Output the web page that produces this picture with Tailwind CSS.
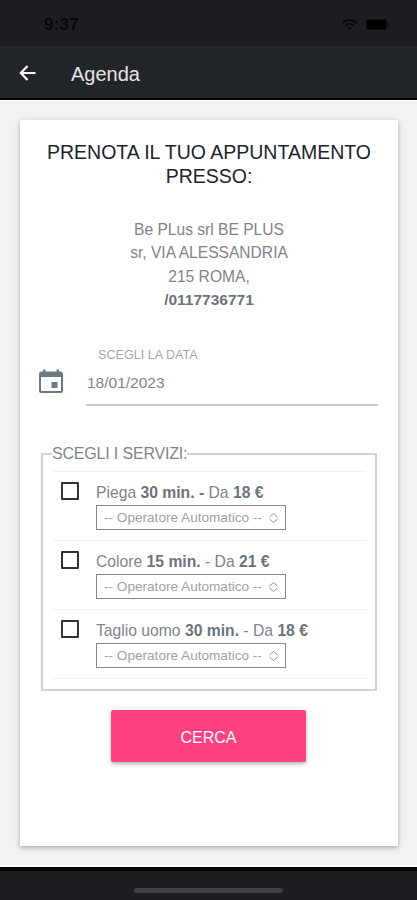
<!DOCTYPE html>
<html lang="it">
<head>
<meta charset="utf-8">
<title>Agenda</title>
<script src="https://cdn.jsdelivr.net/npm/@tailwindcss/browser@4"></script>
</head>
<body class="flex h-[900px] w-[417px] flex-col overflow-hidden bg-[#f1f2f4] font-['Liberation_Sans',Arial,sans-serif] text-[#7c858d]">
<div class="flex h-[46px] shrink-0 items-center justify-between bg-[#1d1e22] pt-[3px] pr-[27px] pl-[44px] text-[#08080a]">
  <span class="text-[17px] leading-none font-semibold tracking-[0.2px]">9:37</span>
  <div class="flex items-center gap-[8px]">
    <svg class="h-[13px] w-[17px]" viewBox="0 0 17 13" fill="none" stroke="currentColor" stroke-width="2"><path d="M1.5 5C5.5 1 11.500 1 15.500 5M4.200 7.800C6.700 5.500 10.300 5.500 12.800 7.800"/><path d="M8.500 12.200L6.300 10Q8.500 8.200 10.700 10Z" fill="currentColor" stroke="none"/></svg>
    <svg class="h-[11px] w-[24px]" viewBox="0 0 24 11"><rect x=".5" y=".5" width="20" height="10" rx="1.500" fill="#000"/><path d="M21.500 1.500Q23.800 3 23.800 5.500T21.500 9.500Z" fill="#111214"/></svg>
  </div>
</div>
<header class="flex h-[54px] shrink-0 items-center border-b-2 border-black bg-[#22262a] pt-[2px] pl-[19px] text-[#e4e4e4]">
  <svg class="h-[16px] w-[17px]" viewBox="0 0 17 16" fill="none" stroke="#fff" stroke-width="2.200"><path d="M8.500 1L1.800 8L8.500 15M2 8H16.500"/></svg>
  <h1 class="ml-[35px] pt-[2px] text-[20px] leading-none">Agenda</h1>
</header>
<main class="h-[767px] shrink-0 border-t border-b-2 border-white px-5 pt-[19px]">
  <section class="flex h-[726px] w-[378px] flex-col bg-white shadow-[0_2px_4px_rgba(0,0,0,0.22),0_1px_8px_rgba(0,0,0,0.1)]">
    <h2 class="mt-[20px] text-center text-[19.500px] leading-[24px] text-[#1b242d]">PRENOTA IL TUO APPUNTAMENTO<br>PRESSO:</h2>
    <p class="mt-[30px] text-center text-[15.600px] leading-[23.300px]">Be PLus srl BE PLUS<br>sr, VIA ALESSANDRIA<br>215 ROMA,<br><b class="text-[15.500px] text-[#6a7480]">/0117736771</b></p>
    <div class="mt-[36px] flex h-[59px] pl-[19px]">
      <svg class="mt-[22px] h-[25px] w-[24px]" viewBox="0 0 24 25"><path fill="#6c7a88" fill-rule="evenodd" d="M4 .5H6.500V2.500H17.500V.5H20V2.500H21.500Q24 2.500 24 5V21.500Q24 24 21.500 24H2.500Q0 24 0 21.500V5Q0 2.500 2.500 2.500H4ZM2 8V22H22V8ZM12.500 13H18.500V19H12.500Z"/></svg>
      <div class="ml-[23px] w-[292px] border-b-2 border-[#c8c9cb]">
        <div class="pl-[12px] text-[12.600px] leading-[16px] text-[#a2a7ab]">SCEGLI LA DATA</div>
        <div class="mt-[10px] pl-px text-[15.500px] leading-[20px]">18/01/2023</div>
      </div>
    </div>
    <fieldset class="mt-[38px] ml-[21px] h-[247px] w-[336px] border-2 border-[#d0d1d3] px-[9px]">
      <legend class="text-[16px] leading-[20px] tracking-[-0.180px] whitespace-nowrap">SCEGLI I SERVIZI:</legend>
      <div class="mt-[7px] w-[314px] border-t border-[#f0f1f2]">
        <div class="flex h-[69px] border-b border-[#f0f1f2] pt-[10px] pl-[9px]">
          <span class="h-[18px] w-[18px] shrink-0 rounded-[1px] border-2 border-[#303236]"></span>
          <div class="ml-[17px]">
            <div class="text-[15.700px] leading-[22px] whitespace-nowrap">Piega <b class="text-[#6a7480]">30 min. -</b> Da <b class="text-[#6a7480]">18 €</b></div>
            <div class="mt-px flex h-[25px] w-[190px] items-center border border-[#85888b] pt-px pl-[7px] text-[13.600px] whitespace-nowrap text-[#a0a2a4]"><span>-- Operatore Automatico --</span><svg class="mr-[7px] ml-auto h-[12px] w-[9px]" viewBox="0 0 9 12" fill="none" stroke="#8c8e90"><path d="M.5 5L4.500 1.500L8.500 5M.5 7L4.500 10.500L8.500 7"/></svg></div>
          </div>
        </div>
        <div class="flex h-[69px] border-b border-[#f0f1f2] pt-[10px] pl-[9px]">
          <span class="h-[18px] w-[18px] shrink-0 rounded-[1px] border-2 border-[#303236]"></span>
          <div class="ml-[17px]">
            <div class="text-[15.700px] leading-[22px] whitespace-nowrap">Colore <b class="text-[#6a7480]">15 min.</b> - Da <b class="text-[#6a7480]">21 €</b></div>
            <div class="mt-px flex h-[25px] w-[190px] items-center border border-[#85888b] pt-px pl-[7px] text-[13.600px] whitespace-nowrap text-[#a0a2a4]"><span>-- Operatore Automatico --</span><svg class="mr-[7px] ml-auto h-[12px] w-[9px]" viewBox="0 0 9 12" fill="none" stroke="#8c8e90"><path d="M.5 5L4.500 1.500L8.500 5M.5 7L4.500 10.500L8.500 7"/></svg></div>
          </div>
        </div>
        <div class="flex h-[69px] border-b border-[#f0f1f2] pt-[10px] pl-[9px]">
          <span class="h-[18px] w-[18px] shrink-0 rounded-[1px] border-2 border-[#303236]"></span>
          <div class="ml-[17px]">
            <div class="text-[15.700px] leading-[22px] whitespace-nowrap">Taglio uomo <b class="text-[#6a7480]">30 min.</b> - Da <b class="text-[#6a7480]">18 €</b></div>
            <div class="mt-px flex h-[25px] w-[190px] items-center border border-[#85888b] pt-px pl-[7px] text-[13.600px] whitespace-nowrap text-[#a0a2a4]"><span>-- Operatore Automatico --</span><svg class="mr-[7px] ml-auto h-[12px] w-[9px]" viewBox="0 0 9 12" fill="none" stroke="#8c8e90"><path d="M.5 5L4.500 1.500L8.500 5M.5 7L4.500 10.500L8.500 7"/></svg></div>
          </div>
        </div>
      </div>
    </fieldset>
    <button class="mt-[19px] ml-[91px] h-[52px] w-[195px] rounded-[2px] bg-[#ff4081] pt-[3px] text-[16px] text-white shadow-[0_2px_4px_rgba(0,0,0,0.3)]">CERCA</button>
  </section>
</main>
<footer class="flex h-[33px] shrink-0 justify-center border-t-4 border-[#08090b] bg-[#1d1e22] pt-[17px]">
  <div class="h-[5px] w-[149px] rounded-full bg-[#404145]"></div>
</footer>
</body>
</html>
